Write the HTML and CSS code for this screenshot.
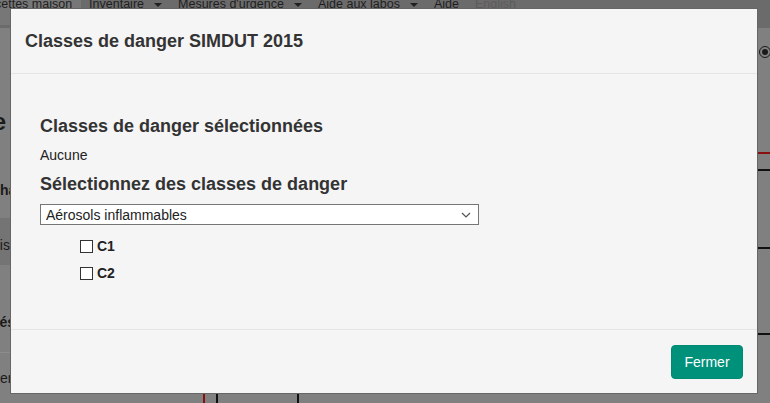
FILE: index.html
```html
<!DOCTYPE html>
<html lang="fr">
<head>
<meta charset="utf-8">
<title>Classes de danger SIMDUT 2015</title>
<link rel="stylesheet" href="styles.css">
</head>
<body>
<div class="page">
  <nav class="nav">
    <span class="nav-item active">Recettes maison</span>
    <span class="nav-item">Inventaire<span class="caret"></span></span>
    <span class="nav-item">Mesures d'urgence<span class="caret"></span></span>
    <span class="nav-item">Aide aux labos<span class="caret"></span></span>
    <span class="nav-item">Aide</span>
    <span class="nav-item muted">English</span>
  </nav>
  <main class="main">
    <aside class="side">
      <div class="frag frag-e">Inventaire</div>
      <div class="frag frag-ha">Achats</div>
      <div class="band"><div class="frag frag-is">Listes</div></div>
      <div class="frag frag-es">Archivés</div>
      <div class="sep"></div>
      <div class="frag frag-ery">Battery</div>
    </aside>
    <section class="content">
      <div class="toolbar"><span class="radio"></span></div>
      <div class="tbl">
        <div class="tr head"><div class="td c1"></div><div class="td c2"></div><div class="td"></div></div>
        <div class="tr r2"><div class="td c1"></div><div class="td c2"></div><div class="td"></div></div>
        <div class="tr r3"><div class="td c1"></div><div class="td c2"></div><div class="td"></div></div>
        <div class="tr r4"><div class="td c1"></div><div class="td c2"></div><div class="td"></div></div>
      </div>
    </section>
  </main>
</div>

<div class="overlay">
  <div class="modal">
    <header class="modal-header">
      <h4 class="modal-title">Classes de danger SIMDUT 2015</h4>
    </header>
    <div class="modal-body">
      <h3 class="sub">Classes de danger sélectionnées</h3>
      <p class="none">Aucune</p>
      <h3 class="sub sub2">Sélectionnez des classes de danger</h3>
      <div class="select">
        <span>Aérosols inflammables</span>
        <svg class="chev" width="10" height="6" viewBox="0 0 10 6"><path d="M1 1 L5 5 L9 1" fill="none" stroke="#555" stroke-width="1.2"/></svg>
      </div>
      <label class="check"><span class="box"></span><b>C1</b></label>
      <label class="check"><span class="box"></span><b>C2</b></label>
    </div>
    <footer class="modal-footer">
      <button class="btn">Fermer</button>
    </footer>
  </div>
</div>
</body>
</html>
```

FILE: styles.css
```css
* { box-sizing: border-box; }
html, body { margin: 0; padding: 0; }
body {
  width: 770px;
  height: 403px;
  overflow: hidden;
  background: #808080;
  font-family: "Liberation Sans", Arial, sans-serif;
  color: #1c1c1c;
}
.page { width: 770px; height: 403px; overflow: hidden; }

.nav {
  display: flex;
  margin-top: -5px;
  height: 33px;
  background: #6b6b6b;
  font-size: 12.5px;
  line-height: 16px;
  margin-left: -29px;
  padding-top: 1px;
}
.nav-item { padding: 0 8px; color: #1f1f1f; white-space: nowrap; display: flex; align-items: center; height: 16px; }
.nav-item.active { background: #777777; padding-right: 9px; height: 29px; align-items: flex-start; }
.nav-item.muted { color: #5c5c5c; }
.caret {
  display: inline-block;
  width: 0; height: 0;
  margin-left: 10px;
  border-left: 4px solid transparent;
  border-right: 4px solid transparent;
  border-top: 4px solid #1f1f1f;
  margin-top: 1px;
}

.main {
  display: grid;
  grid-template-columns: 203px 1fr;
}
.side { overflow: hidden; }
.frag {
  white-space: nowrap;
  color: #1a1a1a;
  font-size: 14px;
  line-height: 20px;
}
.frag-e {
  width: 210px;
  margin-left: -204px;
  text-align: right;
  margin-top: 82px;
  font-size: 24px;
  line-height: 24px;
  font-weight: bold;
}
.frag-ha { margin-top: 46px; font-weight: bold; margin-left: -18px; }
.band { margin-top: 18px; height: 47px; width: 10px; background: #747474; padding-top: 17px; overflow: hidden; }
.frag-is { margin-left: -8px; }
.frag-es { margin-top: 47px; font-weight: bold; margin-left: -44px; }
.sep { margin-top: 20px; height: 1px; width: 10px; background: #8c8c8c; }
.frag-ery { margin-top: 15px; margin-left: -25px; }

.content { min-width: 0; }
.toolbar { display: flex; justify-content: flex-end; margin-top: 18px; margin-right: -1px; }
.radio {
  width: 12px; height: 12px;
  border: 1px solid #1a1a1a;
  border-radius: 50%;
  display: flex; align-items: center; justify-content: center;
}
.radio::after { content: ""; width: 6px; height: 6px; border-radius: 50%; background: #1a1a1a; }

.tbl {
  margin-top: 94px;
  border-top: 2px solid #8a1010;
  border-left: 2px solid #8a1010;
}
.tr { display: grid; grid-template-columns: 13px 81px 1fr; border-bottom: 2px solid #111; }
.td { height: 100%; }
.c1, .c2 { border-right: 2px solid #111; }
.head { height: 17px; }
.r2 { height: 78px; }
.r3 { height: 86px; }
.r4 { height: 80px; }

.overlay {
  position: fixed;
  inset: 0;
}
.modal {
  position: absolute;
  left: 10px;
  top: 8px;
  width: 748px;
  height: 386px;
  background: #f5f5f5;
  border: 1px solid #666;
  display: flex;
  flex-direction: column;
  color: #333;
}
.modal-header {
  padding: 15px 14px;
  border-bottom: 1px solid #e5e5e5;
  height: 65px;
}
.modal-title {
  margin: 0;
  font-size: 18px;
  line-height: 34px;
  font-weight: bold;
  color: #333;
}
.modal-body {
  flex: 1;
  padding: 42px 29px 0;
}
.sub {
  margin: 0;
  font-size: 18px;
  line-height: 20px;
  font-weight: bold;
  color: #333;
}
.none { margin: 9px 0 0; font-size: 14px; line-height: 20px; color: #222; }
.sub2 { margin-top: 9px; }
.select {
  margin-top: 10px;
  width: 439px;
  height: 21px;
  background: #fff;
  border: 1px solid #767676;
  display: flex;
  align-items: center;
  justify-content: space-between;
  padding: 0 7px 0 5px;
  font-size: 14px;
  color: #222;
}
.chev { display: block; }
.check {
  display: flex;
  align-items: center;
  height: 20px;
  margin-left: 40px;
  margin-top: 7px;
  font-size: 14px;
  color: #222;
}
.select + .check { margin-top: 11px; }
.box {
  width: 13px; height: 13px;
  border: 1px solid #333;
  background: #fff;
  margin-right: 4px;
}
.modal-footer {
  border-top: 1px solid #e5e5e5;
  padding: 15px 14px 14px;
  display: flex;
  justify-content: flex-end;
}
.btn {
  width: 72px;
  height: 34px;
  background: #00917a;
  border: 1px solid #008a73;
  border-radius: 4px;
  color: #fff;
  font-family: "Liberation Sans", Arial, sans-serif;
  font-size: 14px;
  padding: 0;
}
```
